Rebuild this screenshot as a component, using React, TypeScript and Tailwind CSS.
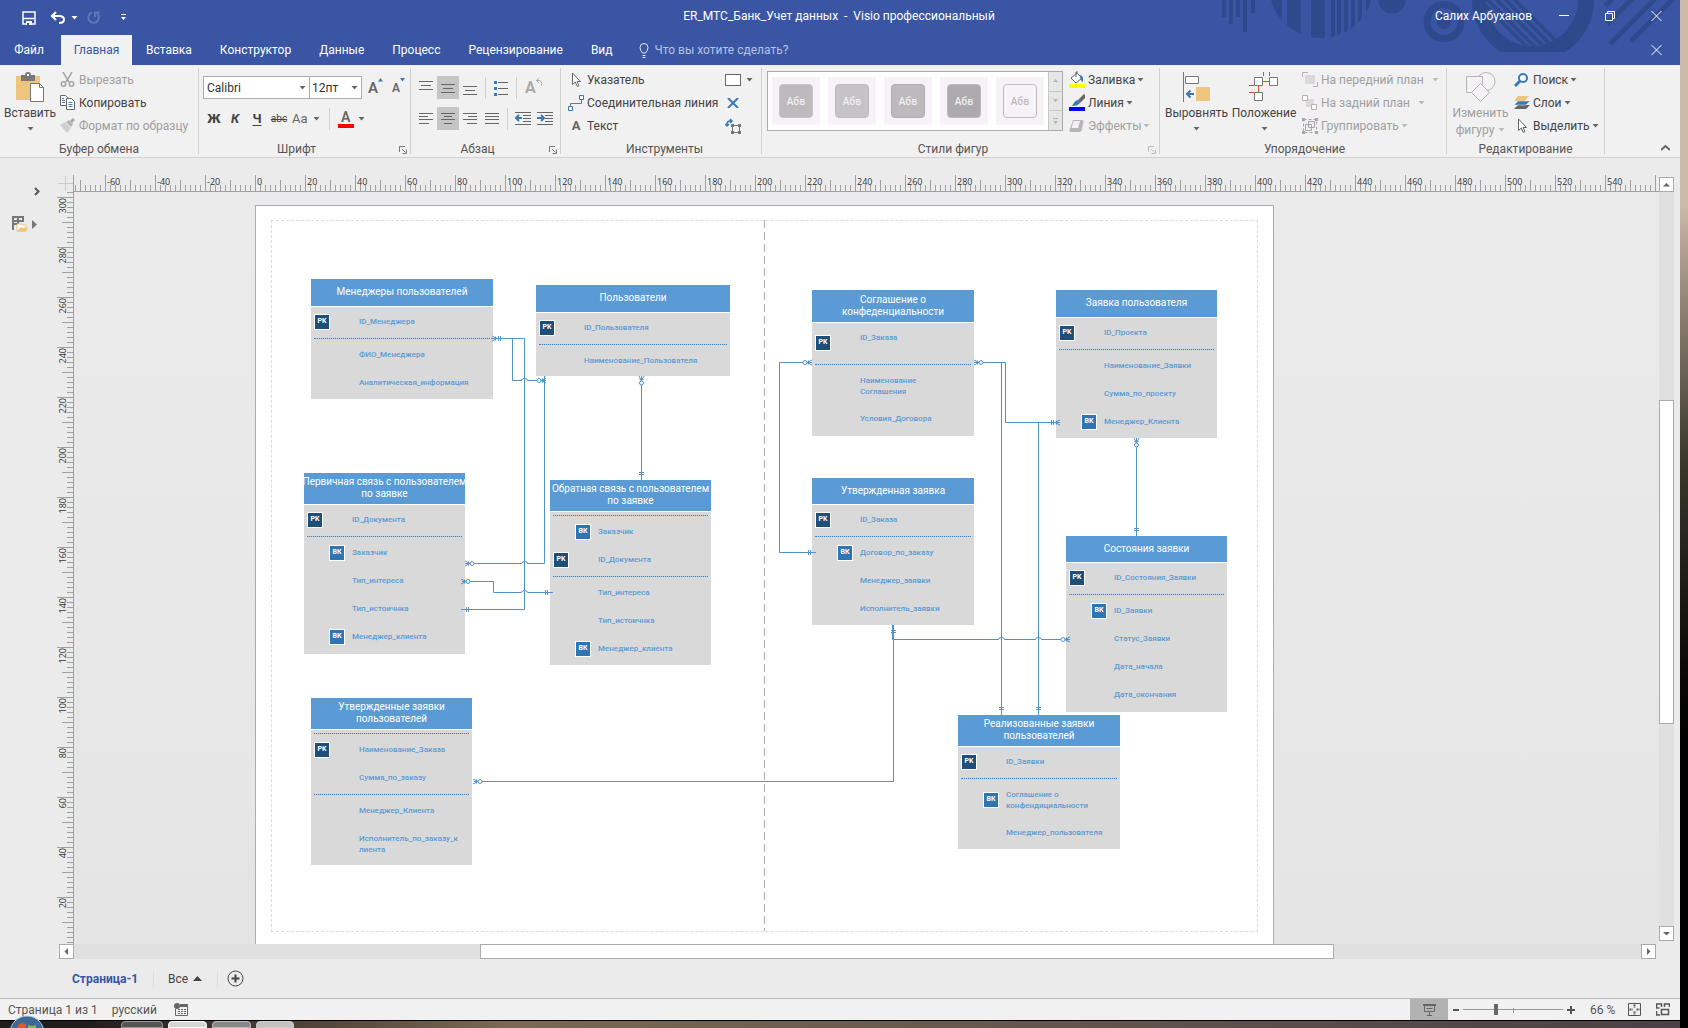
import React from 'react';

interface Row {
  name?: string[];
  pk?: boolean;
  fk?: boolean;
  top?: boolean;
}

interface Entity {
  title: string[];
  x: number;
  y: number;
  w: number;
  head: number;
  body: number;
  rows: Row[];
}

// a row without a name is a divider
const ENTITIES: Entity[] = [
  {
    title: ['Менеджеры пользователей'], x: 55, y: 73, w: 182, head: 27, body: 92,
    rows: [{ name: ['ID_Менеджера'], pk: true }, {}, { name: ['ФИО_Менеджера'] }, { name: ['Аналитическая_информация'] }],
  },
  {
    title: ['Пользователи'], x: 280, y: 79, w: 194, head: 27, body: 63,
    rows: [{ name: ['ID_Пользователя'], pk: true }, {}, { name: ['Наименование_Пользователя'] }],
  },
  {
    title: ['Первичная связь с пользователем', 'по заявке'], x: 48, y: 267, w: 161, head: 31, body: 149,
    rows: [
      { name: ['ID_Документа'], pk: true }, {}, { name: ['Заказчик'], fk: true }, { name: ['Тип_интереса'] },
      { name: ['Тип_истоичнка'] }, { name: ['Менеджер_клиента'], fk: true },
    ],
  },
  {
    title: ['Обратная связь с пользователем', 'по заявке'], x: 294, y: 274, w: 161, head: 31, body: 153,
    rows: [
      {}, { name: ['Заказчик'], fk: true }, { name: ['ID_Документа'], pk: true }, {}, { name: ['Тип_интереса'] },
      { name: ['Тип_истоичнка'] }, { name: ['Менеджер_клиента'], fk: true },
    ],
  },
  {
    title: ['Утвержденные заявки', 'пользователей'], x: 55, y: 492, w: 161, head: 31, body: 135,
    rows: [
      {}, { name: ['Наименование_Заказа'], pk: true }, { name: ['Сумма_по_заказу'] }, {},
      { name: ['Менеджер_Клиента'] }, { name: ['Исполнитель_по_заказу_к', 'лиента'] },
    ],
  },
  {
    title: ['Соглашение о', 'конфеденциальности'], x: 556, y: 84, w: 162, head: 32, body: 113,
    rows: [
      { name: ['ID_Заказа'], pk: true, top: true }, {}, { name: ['Наименование', 'Соглашения'] }, { name: ['Условия_Договора'] },
    ],
  },
  {
    title: ['Утвержденная заявка'], x: 556, y: 272, w: 162, head: 26, body: 120,
    rows: [
      { name: ['ID_Заказа'], pk: true }, {}, { name: ['Договор_по_заказу'], fk: true },
      { name: ['Менеджер_заявки'] }, { name: ['Исполнитель_заявки'] },
    ],
  },
  {
    title: ['Заявка пользователя'], x: 800, y: 84, w: 161, head: 27, body: 120,
    rows: [
      { name: ['ID_Проекта'], pk: true }, {}, { name: ['Наименование_Заявки'] },
      { name: ['Сумма_по_проекту'] }, { name: ['Менеджер_Клиента'], fk: true },
    ],
  },
  {
    title: ['Состояния заявки'], x: 810, y: 330, w: 161, head: 26, body: 149,
    rows: [
      { name: ['ID_Состояния_Заявки'], pk: true }, {}, { name: ['ID_Заявки'], fk: true },
      { name: ['Статус_Заявки'] }, { name: ['Дата_начала'] }, { name: ['Дата_окончания'] },
    ],
  },
  {
    title: ['Реализованные заявки', 'пользователей'], x: 702, y: 509, w: 162, head: 31, body: 102,
    rows: [
      { name: ['ID_Заявки'], pk: true }, {}, { name: ['Соглашение о', 'конфендициальности'], fk: true },
      { name: ['Менеджер_пользователя'] },
    ],
  },
];

const CONNECTORS = [
  'M235 132.5H268.5V403.5H205',
  'M256.5 132.5V174.5H265.5a3 2 0 0 1 6 0H290',
  'M288.5 170V357.5H271.5a3 2 0 0 0 -6 0H209',
  'M206 375.5H237.5V386.5H265.5a3 2 0 0 1 6 0H297',
  'M385.5 170V274',
  'M556 156.5H523.5V346.5H560',
  'M718 156.5H749.5V216.5H804',
  'M745.5 156.5V509',
  'M782.5 216.5V509',
  'M880.5 232V330',
  'M636.5 419V433.5H742.5a3 2 0 0 1 6 0H779.5a3 2 0 0 1 6 0H814',
  'M637.5 419V575.5H218',
];

type EndKind = 'one' | 'many' | 'optional';

const ENDS: { kind: EndKind; x: number; y: number; turn: number }[] = [
  { kind: 'many', x: 236, y: 132.5, turn: 0 },
  { kind: 'one', x: 205, y: 403.5, turn: 0 },
  { kind: 'optional', x: 290, y: 174.5, turn: 180 },
  { kind: 'optional', x: 209, y: 357.5, turn: 0 },
  { kind: 'optional', x: 205, y: 375.5, turn: 0 },
  { kind: 'one', x: 297, y: 386.5, turn: 180 },
  { kind: 'optional', x: 385.5, y: 170, turn: 90 },
  { kind: 'one', x: 385.5, y: 274, turn: -90 },
  { kind: 'optional', x: 556, y: 156.5, turn: 180 },
  { kind: 'one', x: 560, y: 346.5, turn: 180 },
  { kind: 'optional', x: 718, y: 156.5, turn: 0 },
  { kind: 'many', x: 804, y: 216.5, turn: 180 },
  { kind: 'one', x: 745.5, y: 509, turn: -90 },
  { kind: 'one', x: 782.5, y: 509, turn: -90 },
  { kind: 'optional', x: 880.5, y: 232, turn: 90 },
  { kind: 'one', x: 880.5, y: 330, turn: -90 },
  { kind: 'one', x: 637.5, y: 419, turn: 90 },
  { kind: 'optional', x: 814, y: 433.5, turn: 180 },
  { kind: 'optional', x: 217, y: 575.5, turn: 0 },
];

const TABS = ['Вставка', 'Конструктор', 'Данные', 'Процесс', 'Рецензирование', 'Вид'];

const Arrow: React.FC<{ className?: string }> = ({ className = 'text-[#666]' }) => (
  <svg className={`shrink-0 ${className}`} width="7" height="4" viewBox="0 0 7 4" fill="currentColor">
    <path d="M.5 0h6L3.500 3.500z" />
  </svg>
);

const Launcher: React.FC<{ faded?: boolean }> = ({ faded }) => (
  <button aria-label="Параметры" className={`absolute right-[3px] bottom-0 ${faded ? 'text-[#bbb]' : 'text-[#777]'}`}>
    <svg width="8" height="8" viewBox="0 0 8 8" fill="none" stroke="currentColor">
      <path d="M.5 6V.5H6M3 3l3.500 3.500M7.500 3.500v4h-4" />
    </svg>
  </button>
);

const Group: React.FC<{ title: string; className: string; launcher?: 'on' | 'faded'; children: React.ReactNode }> = ({
  title, className, launcher, children,
}) => (
  <section className={`relative my-[3px] flex shrink-0 flex-col border-r border-[#d0d0d0] ${className}`}>
    <div className="flex h-[72px] shrink-0">{children}</div>
    <h2 className={`text-center text-[12px] leading-[18px] text-[#555] ${launcher ? 'pr-5' : ''}`}>{title}</h2>
    {launcher && <Launcher faded={launcher === 'faded'} />}
  </section>
);

const Item: React.FC<{ icon: React.ReactNode; label: string; arrow?: boolean; wide?: boolean; off?: boolean }> = ({
  icon, label, arrow, wide, off,
}) => (
  <button className={`flex h-[23px] items-center whitespace-nowrap ${off ? 'text-[#a0a0a0]' : 'text-[#444]'}`}>
    <span className="flex w-[19px] shrink-0">{icon}</span>
    {label}
    {arrow && <Arrow className={`${wide ? 'ml-[8px]' : 'ml-[2px]'} ${off ? 'text-[#bbb]' : 'text-[#666]'}`} />}
  </button>
);

/* Horizontal strokes of a paragraph icon */
const Lines: React.FC<{ rows: [number, number, number][] }> = ({ rows }) => (
  <svg width="14" height="14" viewBox="0 0 14 14" stroke="#666">
    {rows.map(([x1, x2, y]) => <path key={y} d={`M${x1} ${y}.5H${x2}`} />)}
  </svg>
);

const ParaButton: React.FC<{ label: string; on?: boolean; children: React.ReactNode }> = ({ label, on, children }) => (
  <button aria-label={label} className={`flex h-[23px] w-[22px] items-center justify-center ${on ? 'bg-[#c5c5c5]' : ''}`}>
    {children}
  </button>
);

const Cursor = () => (
  <svg width="16" height="16" viewBox="0 0 16 16" fill="#fff" stroke="#666">
    <path d="M4.500 1v11.500l2.800-2.500 2 4.500 1.700-.8-2-4.200h3.500z" />
  </svg>
);

const VSep = () => <span className="block h-[22px] w-px bg-[#d0d0d0]" />;

const Clipboard = () => (
  <Group title="Буфер обмена" className="w-[199px]">
    <button className="flex w-[60px] flex-col items-center pt-1 text-[#444]">
      <svg width="30" height="31" viewBox="0 0 30 31">
        <path d="M1 4h24v24H1z" fill="#eec57c" />
        <path d="M6 3h4q0-3 3-3t3 3h4v6H6z" fill="#777" />
        <path d="M12 2h2v2h-2z" fill="#fff" />
        <path d="M15.500 11.500h9l4 4v14h-13z" fill="#fff" stroke="#777" />
        <path d="M24.500 11.500v4h4" fill="none" stroke="#777" />
      </svg>
      <span className="leading-[20px]">Вставить</span>
      <Arrow className="mt-1 text-[#666]" />
    </button>
    <div className="flex flex-col">
      <Item off label="Вырезать" icon={
        <svg width="15" height="15" viewBox="0 0 15 15" fill="none" stroke="#a5a5a5" strokeWidth="1.500">
          <path d="M3 0l6 10M12 0L6 10" /><circle cx="3.500" cy="12" r="2.200" /><circle cx="11.500" cy="12" r="2.200" />
        </svg>
      } />
      <Item label="Копировать" icon={
        <svg width="15" height="15" viewBox="0 0 15 15" fill="#fff" stroke="#666">
          <path d="M.5.500h5l2 2v8h-7z" /><path d="M6.500 3.500h5l3 3v8h-8z" />
          <path d="M2 3.500h2M2 5.500h3M2 7.500h3M8.500 7.500h4M8.500 9.500h4M8.500 11.500h4" stroke="#3c78b4" />
        </svg>
      } />
      <Item off label="Формат по образцу" icon={
        <svg width="15" height="15" viewBox="0 0 15 15">
          <path d="M10 3l3-3 2 2-3 3z" fill="#a5a5a5" /><path d="M6 4l3-2 4 4-2 3z" fill="#b5b5b5" />
          <path d="M0 7l5-3 6 6-4 5z" fill="#d0ccd0" />
        </svg>
      } />
    </div>
  </Group>
);

const FontGroup = () => (
  <Group title="Шрифт" className="w-[212px] pl-1" launcher="on">
    <div className="flex flex-col gap-2 pt-[8px]">
      <div className="flex h-[23px] items-center">
        <div className="relative">
          <select aria-label="Шрифт" className="h-[23px] w-[107px] appearance-none border border-[#ababab] bg-white pl-[3px] text-[#333]">
            <option>Calibri</option>
          </select>
          <Arrow className="absolute top-[10px] right-1 text-[#666]" />
        </div>
        <div className="relative -ml-px">
          <select aria-label="Размер шрифта" className="h-[23px] w-[53px] appearance-none border border-[#ababab] bg-white pl-[2px] text-[#333]">
            <option>12пт</option>
          </select>
          <Arrow className="absolute top-[10px] right-1 text-[#666]" />
        </div>
        <button aria-label="Увеличить размер" className="ml-[6px] flex w-[22px] text-[15px] leading-[20px] font-semibold text-[#666]">
          A<svg width="5" height="4" viewBox="0 0 5 4" fill="#3c78b4"><path d="M0 3.500L2.500 0 5 3.500z" /></svg>
        </button>
        <button aria-label="Уменьшить размер" className="ml-[2px] flex text-[12px] leading-[20px] font-semibold text-[#666]">
          A<svg width="5" height="4" viewBox="0 0 5 4" fill="#3c78b4"><path d="M0 0h5L2.500 3.500z" /></svg>
        </button>
      </div>
      <div className="flex h-[23px] items-center text-[13px] text-[#444]">
        <button className="w-[22px] font-extrabold">Ж</button>
        <button className="w-[20px] font-bold italic">К</button>
        <button className="w-[24px] font-bold underline underline-offset-2">Ч</button>
        <button className="w-[20px] text-[10px] line-through">abc</button>
        <button className="flex items-center gap-[5px] pl-[3px] text-[#666]">Aa<Arrow /></button>
        <span className="ml-[9px]"><VSep /></span>
        <button aria-label="Цвет текста" className="ml-2 flex items-center gap-1">
          <span className="flex w-[16px] flex-col items-center">
            <span className="text-[14px] leading-[14px] font-semibold text-[#666]">A</span>
            <span className="h-[4px] w-[16px] bg-[#f00]" />
          </span>
          <Arrow />
        </button>
      </div>
    </div>
  </Group>
);

const Paragraph = () => (
  <Group title="Абзац" className="w-[150px] pl-[4px]" launcher="on">
    <div className="flex flex-col gap-2 pt-[8px]">
      <div className="flex h-[23px] items-center">
        <ParaButton label="По верхнему краю"><Lines rows={[[0, 14, 0], [2, 12, 4], [0, 14, 8]]} /></ParaButton>
        <ParaButton label="По середине" on><Lines rows={[[0, 14, 3], [2, 12, 7], [0, 14, 11]]} /></ParaButton>
        <ParaButton label="По нижнему краю"><Lines rows={[[0, 14, 5], [2, 12, 9], [0, 14, 13]]} /></ParaButton>
        <span className="px-1"><VSep /></span>
        <ParaButton label="Маркеры">
          <svg width="14" height="16" viewBox="0 0 14 16">
            <path d="M0 1h3v3H0zM0 7h3v3H0zM0 13h3v3H0z" fill="#3c78b4" />
            <path d="M4 2.500h10M4 8.500h10M4 14.500h10" stroke="#666" />
          </svg>
        </ParaButton>
        <span className="px-1"><VSep /></span>
        <button aria-label="Поворот текста" className="ml-1 flex text-[16px] leading-[20px] font-bold text-[#aaa]">
          A
          <svg width="7" height="9" viewBox="0 0 7 9" fill="none" stroke="#aaa">
            <path d="M0 2.500h3q3 0 2.500 5M3 0L.5 2.500 3 5" />
          </svg>
        </button>
      </div>
      <div className="flex h-[23px] items-center">
        <ParaButton label="По левому краю"><Lines rows={[[0, 14, 1], [0, 9, 4], [0, 14, 7], [0, 10, 11]]} /></ParaButton>
        <ParaButton label="По центру" on><Lines rows={[[0, 14, 1], [3, 11, 4], [0, 14, 7], [3, 11, 11]]} /></ParaButton>
        <ParaButton label="По правому краю"><Lines rows={[[0, 14, 1], [5, 14, 4], [0, 14, 7], [4, 14, 11]]} /></ParaButton>
        <ParaButton label="По ширине"><Lines rows={[[0, 14, 1], [0, 14, 4], [0, 14, 7], [0, 14, 11]]} /></ParaButton>
        <span className="px-1"><VSep /></span>
        {['M4 3L1 6l3 3M1 6h6', 'M4 3l3 3-3 3M7 6H0'].map((d) => (
          <ParaButton key={d} label="Отступ">
            <svg width="16" height="13" viewBox="0 0 16 13" fill="none">
              <path d="M0 .500h16M8 3.500h8M8 6.500h8M8 9.500h8M0 12.500h16" stroke="#666" />
              <path d={d} stroke="#3c78b4" strokeWidth="2" />
            </svg>
          </ParaButton>
        ))}
      </div>
    </div>
  </Group>
);

const Tools = () => (
  <Group title="Инструменты" className="w-[201px] pl-[7px]">
    <div className="flex w-[157px] flex-col">
      <Item label="Указатель" icon={<Cursor />} />
      <Item label="Соединительная линия" icon={
        <svg width="16" height="16" viewBox="0 0 16 16" fill="#fff">
          <path d="M2.500 11V8.500h11V5" fill="none" stroke="#777" />
          <path d="M11.500.500h4v4h-4zM.5 11.500h4v4h-4z" stroke="#3c78b4" />
        </svg>
      } />
      <Item label="Текст" icon={<span className="w-[16px] text-center text-[13px] font-bold text-[#666]">A</span>} />
    </div>
    <div className="flex flex-col">
      <button aria-label="Прямоугольник" className="flex h-[23px] items-center gap-[5px]">
        <span className="h-[12px] w-[16px] border border-[#666] bg-white" />
        <Arrow />
      </button>
      <button aria-label="Точка соединения" className="flex h-[23px] w-[16px] items-center justify-center">
        <svg width="12" height="10" viewBox="0 0 12 10" stroke="#3c78b4" strokeWidth="2"><path d="M1 0l10 10M11 0L1 10" /></svg>
      </button>
      <button aria-label="Текстовый блок" className="flex h-[23px] w-[16px] items-center">
        <svg width="16" height="16" viewBox="0 0 16 16" fill="none">
          <path d="M2 9V6q0-3 3-3h2M5 1l2 2-2 2M0 6l2 2 2-2" stroke="#3c78b4" strokeWidth="1.500" />
          <path d="M7.500 7.500h7v7h-7z" stroke="#777" />
          <path d="M6 6h3v3H6zM13 6h3v3h-3zM6 13h3v3H6zM13 13h3v3h-3z" fill="#777" />
        </svg>
      </button>
    </div>
  </Group>
);

const STYLES = [
  'bg-[#bdbabd] border-[#c6c3c6] text-[#eee]',
  'bg-[#c6c3c6] border-[#bdbabd] text-[#eee]',
  'bg-[#bdbabd] border-[#b0adb0] text-[#eee]',
  'bg-[#adaaad] border-[#bdbabd] text-[#eee]',
  'bg-[#f7f2f7] border-[#c0bdc0] text-[#c0bdc0]',
];

const ShapeStyles = () => (
  <Group title="Стили фигур" className="w-[398px] pl-[5px]" launcher="faded">
    <div className="mt-[3px] flex h-[60px] border border-[#ababab] bg-white">
      <div className="flex gap-2 px-1 py-[5px]">
        {STYLES.map((style, i) => (
          <button key={i} className="flex h-[48px] w-[48px] items-center justify-center bg-[#f7f2f7]">
            <span className={`flex h-[34px] w-[34px] items-center justify-center rounded-[4px] border font-['Open_Sans',sans-serif] text-[10px] font-semibold ${style}`}>Абв</span>
          </button>
        ))}
      </div>
      <div className="flex w-[14px] flex-col divide-y divide-[#c6c6c6] border-l border-[#c6c6c6] bg-[#e6e6e6]">
        {['M0 4h5L2.500 1z', 'M0 1h5L2.500 4z', 'M0 0h5v1H0zM0 3h5L2.500 6z'].map((d) => (
          <button key={d} aria-label="Прокрутка стилей" className="flex flex-1 items-center justify-center">
            <svg width="5" height="6" viewBox="0 0 5 6" fill="#b5b5b5"><path d={d} /></svg>
          </button>
        ))}
      </div>
    </div>
    <div className="flex flex-col pl-[6px]">
      <Item label="Заливка" arrow icon={
        <svg width="16" height="17" viewBox="0 0 16 17">
          <path d="M2 7l6-5 5 5-6 5z" fill="#fff" stroke="#666" /><path d="M7 6V1h2" fill="none" stroke="#666" />
          <path d="M11 4q4 1 3 7-3-1-3-7z" fill="#3c78b4" /><path d="M0 13h16v4H0z" fill="#ff0" />
        </svg>
      } />
      <Item label="Линия" arrow icon={
        <svg width="16" height="17" viewBox="0 0 16 17">
          <path d="M9 6l6-6 1 1v3l-5 5z" fill="#666" /><path d="M3 12q3-6 6-6l2 3q-2 3-8 3z" fill="#3c78b4" />
          <path d="M0 13h16v4H0z" fill="#00f" />
        </svg>
      } />
      <Item label="Эффекты" arrow off icon={
        <svg width="15" height="14" viewBox="0 0 15 14">
          <path d="M4 1h9q2 0 1.500 2L13 10q-.5 3-3 3H2q-2 0-1.500-2z" fill="#b8b5b8" />
          <path d="M4.500 2h6.500l-2 7H2.500z" fill="#f5f2f5" />
        </svg>
      } />
    </div>
  </Group>
);

const Arrange = () => (
  <Group title="Упорядочение" className="w-[287px] pl-[3px]">
    <button className="flex w-[67px] flex-col items-center pt-1 text-[#444]">
      <svg width="28" height="31" viewBox="0 0 28 31">
        <path d="M.5 0v30" stroke="#777" /><path d="M2.500 4.500h13v7h-13z" fill="#fff" stroke="#777" />
        <path d="M13 15h14v14H13z" fill="#eec57c" />
        <path d="M11 22H4M7.500 18.500L4 22l3.500 3.500" stroke="#3c78b4" strokeWidth="2" fill="none" />
      </svg>
      <span className="leading-[20px]">Выровнять</span>
      <Arrow className="mt-1 text-[#666]" />
    </button>
    <button className="flex w-[68px] flex-col items-center pt-1 text-[#444]">
      <svg width="30" height="31" viewBox="0 0 30 31" fill="#fff">
        <path d="M14.500 0v4M20.500 0v4M14 9.500h7M0 13.500h5M9.500 14v6M0 20.500h5" stroke="#d9532c" />
        <path d="M5.500 5.500h8v8h-8zM20.500 5.500h8v8h-8zM5.500 20.500h8v8h-8z" stroke="#777" />
      </svg>
      <span className="leading-[20px]">Положение</span>
      <Arrow className="mt-1 text-[#666]" />
    </button>
    <div className="flex flex-col pl-[4px]">
      <Item off arrow wide label="На передний план" icon={
        <svg width="16" height="16" viewBox="0 0 16 16" fill="none" stroke="#b5b0b5">
          <path d="M3 3h10v9H3z" fill="#dcd7dc" stroke="none" /><path d="M.5 5V.5H6M15.500 10v4.500H11" />
        </svg>
      } />
      <Item off arrow wide label="На задний план" icon={
        <svg width="16" height="16" viewBox="0 0 16 16" fill="#fff" stroke="#b5b0b5">
          <path d="M4 4h8v8H4z" fill="#dcd7dc" stroke="none" /><path d="M.5.500h5v5h-5zM9.500 9.500h5v5h-5z" />
        </svg>
      } />
      <Item off arrow label="Группировать" icon={
        <svg width="16" height="16" viewBox="0 0 16 16" fill="none" stroke="#aaa5aa">
          <path d="M1.500 1.500h13v13h-13z" strokeDasharray="3 2" /><path d="M3.500 6.500h6v6h-6zM6.500 3.500h6v6h-6z" />
          <path d="M0 0h3v3H0zM13 0h3v3h-3zM0 13h3v3H0zM13 13h3v3h-3z" fill="#aaa5aa" stroke="none" />
        </svg>
      } />
    </div>
  </Group>
);

const Editing = () => (
  <Group title="Редактирование" className="w-[158px]">
    <button className="flex w-[67px] flex-col items-center pt-1 text-[#a0a0a0]">
      <svg width="30" height="31" viewBox="0 0 30 31" fill="#f5f2f5" stroke="#b8b3b8">
        <circle cx="20" cy="9.500" r="9" /><path d="M.5 4.500h16v16H.5z" /><path d="M14.500 11.500l9 9-9 9-9-9z" />
      </svg>
      <span className="leading-[20px]">Изменить</span>
      <span className="flex items-center gap-1 leading-[14px]">фигуру<Arrow className="text-[#bbb]" /></span>
    </button>
    <div className="flex flex-col">
      <Item arrow label="Поиск" icon={
        <svg width="15" height="14" viewBox="0 0 15 14" fill="#fff" stroke="#3c78b4" strokeWidth="2">
          <path d="M6 8l-5 5" strokeWidth="3" /><circle cx="9" cy="5" r="4" />
        </svg>
      } />
      <Item arrow label="Слои" icon={
        <svg width="16" height="14" viewBox="0 0 16 14">
          <path d="M4 9h12l-4 4H0z" fill="#666" /><path d="M4 5h12l-4 4H0z" fill="#3c78b4" stroke="#f1f1f1" strokeWidth=".5" />
          <path d="M4 0h11l-4 5H0z" fill="#eec57c" />
        </svg>
      } />
      <Item arrow label="Выделить" icon={<Cursor />} />
    </div>
  </Group>
);

const TitleArt = () => (
  <svg className="absolute top-0 right-0" width="470" height="65" viewBox="0 0 470 65" fill="#2f4a8c">
    <defs>
      <clipPath id="disc"><circle cx="111" cy="-14" r="52" /></clipPath>
      <clipPath id="arc"><path d="M250 0h150v52H250z" /></clipPath>
      <clipPath id="inner"><circle cx="322" cy="0" r="46" /></clipPath>
    </defs>
    <path d="M12 0h4v17h-4zM19 0h4v24h-4zM26 0h4v17h-4zM33 0h4v32h-4zM41 0h4v13h-4z" />
    <path clipPath="url(#disc)" d="M58 0h14v40H58zM77 0h14v40H77zM101 0h14v40h-14zM121 0h4v40h-4zM127 0h4v40h-4zM134 0h4v40h-4zM141 0h4v40h-4zM148 0h4v40h-4zM156 0h6v40h-6z" />
    <circle cx="182" cy="0" r="13.500" />
    <circle cx="234" cy="21.500" r="17" fill="none" stroke="#2f4a8c" strokeWidth="7" />
    <circle cx="234" cy="21.500" r="7.500" />
    <g clipPath="url(#arc)">
      <circle cx="323" cy="0" r="61" />
      <circle cx="322" cy="0" r="46" fill="#3955a3" />
      <path clipPath="url(#inner)" d="M262 -8l70 70M270 -8l70 70M279 -8l70 70M288 -8l70 70M297 -8l70 70" stroke="#2f4a8c" strokeWidth="3.500" />
    </g>
    <path d="M395 6l7-7M397 24l25-25M400 44l45-45M421 41l42-42" stroke="#2f4a8c" strokeWidth="5" />
  </svg>
);

const TitleBar = () => (
  <header className="relative bg-[#3955a3] text-white">
    <TitleArt />
    <div className="relative flex h-[35px] items-center">
      <div className="flex flex-1 items-center pl-[22px]">
        <button aria-label="Сохранить" className="mr-[14px]">
          <svg width="14" height="14" viewBox="0 0 14 14" fill="none" stroke="#fff" strokeWidth="1.500">
            <path d="M1 1h12v12H1zM1 7.500h12" /><path d="M4 10h6v4H4z" fill="#fff" stroke="none" /><path d="M5 12h2v2H5z" fill="#3955a3" stroke="none" />
          </svg>
        </button>
        <button aria-label="Отменить" className="mr-[6px]">
          <svg width="15" height="13" viewBox="0 0 15 13" fill="none" stroke="#fff" strokeWidth="2">
            <path d="M1 5h8q5 0 5 3.500T9 12M6 1L2 5l4 4" />
          </svg>
        </button>
        <Arrow className="mr-[9px] text-white" />
        <button aria-label="Повторить" className="mr-[20px]">
          <svg width="14" height="13" viewBox="0 0 14 13" fill="none" stroke="#5f77b8" strokeWidth="2">
            <path d="M5 1.500A5.300 5.300 0 1 0 10 2.500M8 6V1.500h5" />
          </svg>
        </button>
        <button aria-label="Настройка панели">
          <svg width="5" height="7" viewBox="0 0 5 7" fill="#fff"><path d="M0 0h5v1H0zM0 3h5L2.500 6z" /></svg>
        </button>
      </div>
      <h1 className="pr-6 pb-1 text-[12px] whitespace-pre">ER_МТС_Банк_Учет данных  -  Visio профессиональный</h1>
      <div className="flex flex-1 items-center justify-end pb-1">
        <span className="pr-[27px]">Салих Арбуханов</span>
        <button aria-label="Свернуть" className="mr-[36px] h-px w-[10px] bg-white" />
        <button aria-label="Восстановить" className="mr-[36px]">
          <svg width="10" height="10" viewBox="0 0 10 10" fill="none" stroke="#fff"><path d="M.5 2.500h7v7h-7zM2.500 2.500v-2h7v7h-2" /></svg>
        </button>
        <button aria-label="Закрыть" className="mr-[18px]">
          <svg width="11" height="10" viewBox="0 0 11 10" stroke="#fff"><path d="M.5 0l10 10M10.500 0l-10 10" /></svg>
        </button>
      </div>
    </div>
    <nav className="relative flex h-[30px] items-stretch">
      <button className="w-[61px] pr-[3px]">Файл</button>
      <button className="w-[71px] bg-[#f1f1f1] text-[#3955a3]">Главная</button>
      {TABS.map((tab) => <button key={tab} className="px-[14px]">{tab}</button>)}
      <label className="ml-3 flex items-center gap-[6px]">
        <svg width="10" height="15" viewBox="0 0 10 15" fill="none" stroke="#e5e9f5">
          <path d="M3.500 10Q1 7 1 4.500a4 4 0 0 1 8 0Q9 7 6.500 10zM3.500 12.500h3M3.500 14.500h3" />
        </svg>
        <input placeholder="Что вы хотите сделать?" className="w-[150px] bg-transparent placeholder:text-[#b8c3e3]" />
      </label>
      <button aria-label="Закрыть документ" className="mr-[18px] ml-auto">
        <svg width="11" height="10" viewBox="0 0 11 10" stroke="#fff"><path d="M.5 0l10 10M10.500 0l-10 10" /></svg>
      </button>
    </nav>
  </header>
);

const range = (from: number, to: number) => Array.from({ length: to - from + 1 }, (_, i) => from + i);

// One tick is two millimetres, a labelled one every ten ticks
const HorizontalRuler = () => (
  <svg className="h-[17px] w-full font-['Open_Sans',sans-serif]" stroke="#a0a0a0">
    <path d="M0 16.500H1700" />
    {range(-36, 295).map((n) => (
      <path key={n} d={`M${181.5 + n * 5} 17V${n % 10 === 0 ? 0 : n % 5 === 0 ? 5 : 10}`} />
    ))}
    {range(-3, 27).map((n) => (
      <text key={n} x={183 + n * 50} y="10" fontSize="9" fill="#333" stroke="none">{n * 20}</text>
    ))}
  </svg>
);

const VerticalRuler = () => (
  <svg className="h-full w-[17px] font-['Open_Sans',sans-serif]" stroke="#a0a0a0">
    <path d="M16.500 0V1100" />
    {range(-1, 149).map((n) => (
      <path key={n} d={`M17 ${5.5 + n * 5}H${n % 10 === 0 ? 0 : n % 5 === 0 ? 5 : 10}`} />
    ))}
    {range(0, 14).map((n) => (
      <text key={n} transform={`translate(9 ${6 + n * 50}) rotate(-90)`} textAnchor="end" fontSize="9" fill="#333" stroke="none">{300 - n * 20}</text>
    ))}
  </svg>
);

const Key: React.FC<{ text: string; className: string }> = ({ text, className }) => (
  <span className={`block h-[16px] w-[16px] border border-white text-center text-[7px] leading-[13px] font-bold text-white ${className}`}>
    {text}
  </span>
);

const EntityBox: React.FC<{ entity: Entity }> = ({ entity }) => (
  <article className="absolute flex flex-col" style={{ left: entity.x, top: entity.y, width: entity.w }}>
    <h3
      className="flex flex-col items-center justify-center bg-[#5b9bd5] pb-px text-[10px] leading-[12px] whitespace-nowrap text-white"
      style={{ height: entity.head }}
    >
      {entity.title.map((line) => <span key={line}>{line}</span>)}
    </h3>
    <div className="mt-px bg-[#d9d9d9] px-[3px] pt-px" style={{ height: entity.body }}>
      {entity.rows.map((row, i) => {
        if (!row.name) {
          return <div key={i} className="h-[5px] pt-[2px]"><div className="h-px border-t border-dotted border-[#4a86c0] bg-[#a5c4e2]" /></div>;
        }
        const tall = row.name.length > 1 || row.top;
        return (
          <div key={i} className={`flex items-center ${tall ? 'h-[38px]' : 'h-[28px]'}`}>
            <span className="w-[22px] shrink-0">{row.pk && <Key text="PK" className="bg-[#1f4e79]" />}</span>
            <span className="w-[23px] shrink-0">{row.fk && <Key text="ВК" className="bg-[#2e75b6]" />}</span>
            <span className={`pb-px text-[8px] leading-[11px] font-medium whitespace-nowrap text-[#5b9bd5] ${row.top ? 'self-start pt-[8px]' : ''}`}>
              {row.name.map((line) => <span key={line} className="block">{line}</span>)}
            </span>
          </div>
        );
      })}
    </div>
  </article>
);

const END_PATHS: Record<EndKind, string> = {
  one: 'M5.500 -2.500v5M7.500 -2.500v5',
  many: 'M0 -2.500L5 0L0 2.500M3.500 -2v4M6.500 -2.500v5M8.500 -2.500v5',
  optional: 'M0 -2.500L5 0L0 2.500M3.500 -2v4',
};

const Diagram = () => (
  <>
    {ENTITIES.map((entity) => <EntityBox key={entity.title.join(' ') + entity.x} entity={entity} />)}
    <svg className="absolute top-0 left-0" width="1018" height="737" fill="none" stroke="#5290c8">
      <path d="M508.500 14V725" stroke="#b0b0b0" strokeDasharray="8 4" />
      {CONNECTORS.map((d) => <path key={d} d={d} />)}
      {ENDS.map((end) => (
        <g key={`${end.x}-${end.y}`} transform={`translate(${end.x} ${end.y}) rotate(${end.turn})`}>
          <path d={END_PATHS[end.kind]} />
          {end.kind === 'optional' && <circle cx="7" cy="0" r="2" fill="#fff" />}
        </g>
      ))}
    </svg>
  </>
);

const ScrollButton: React.FC<{ label: string; d: string }> = ({ label, d }) => (
  <button aria-label={label} className="flex h-[15px] w-[15px] shrink-0 items-center justify-center border border-[#ababab] bg-white">
    <svg width="7" height="7" viewBox="0 0 7 7" fill="#666"><path d={d} /></svg>
  </button>
);

const Workspace = () => (
  <main className="flex min-h-0 flex-1 bg-[#ebebeb] pt-[17px]">
    <aside className="flex w-[57px] shrink-0 flex-col items-end gap-[20px] pt-[12px] pr-[17px]">
      <button aria-label="Развернуть">
        <svg width="6" height="9" viewBox="0 0 6 9" fill="none" stroke="#555" strokeWidth="2"><path d="M1 1l3.500 3.500L1 8" /></svg>
      </button>
      <button aria-label="Фигуры" className="flex items-center gap-1 pr-[3px]">
        <svg width="16" height="17" viewBox="0 0 16 17" fill="none">
          <path d="M1 14V1h10v4H1M6 1v7H1" stroke="#777" strokeWidth="2" />
          <path d="M5 15V8h5l1 1h3v6z" fill="#fff" stroke="#eec57c" /><path d="M5 15.500l3-4h8l-2 4z" fill="#eec57c" />
        </svg>
        <svg width="5" height="9" viewBox="0 0 5 9" fill="#777"><path d="M0 0l5 4.500L0 9z" /></svg>
      </button>
    </aside>
    <div className="flex min-w-0 flex-1 flex-col">
      <div className="flex min-h-0 flex-1">
        <div className="flex w-[17px] shrink-0 flex-col">
          <svg className="h-[17px] w-[17px] shrink-0" stroke="#ccc"><path d="M1 8.500h15M8.500 1v15" /><path d="M16.500 0v17" stroke="#a0a0a0" /></svg>
          <div className="min-h-0 flex-1 overflow-hidden"><VerticalRuler /></div>
        </div>
        <div className="flex min-w-0 flex-1 flex-col">
          <HorizontalRuler />
          <div className="min-h-0 flex-1 overflow-hidden bg-linear-to-b from-[#ebebeb] to-[#e5e5e5] pt-[13px] pl-[181px]">
            <div className="relative h-[780px] w-[1019px] border border-[#a8acb4] bg-white">
              <div className="absolute top-[14px] left-[15px] h-[712px] w-[987px] border border-dashed border-[#dcdcdc]" />
              <Diagram />
            </div>
          </div>
        </div>
        <div className="mt-[2px] mr-[6px] mb-[3px] flex w-[15px] shrink-0 flex-col bg-[#e0e0e0]">
          <ScrollButton label="Вверх" d="M0 5.500h7L3.500 2z" />
          <div className="mt-[208px] h-[324px] border border-[#ababab] bg-white" />
          <div className="flex-1" />
          <ScrollButton label="Вниз" d="M0 2h7L3.500 5.500z" />
        </div>
      </div>
      <div className="mr-[24px] ml-[2px] flex h-[15px] shrink-0 bg-[#e0e0e0]">
        <ScrollButton label="Влево" d="M5 0v7L1.500 3.500z" />
        <div className="ml-[406px] w-[854px] border border-[#ababab] bg-white" />
        <div className="flex-1" />
        <ScrollButton label="Вправо" d="M2 0v7l3.500-3.500z" />
      </div>
      <div className="flex h-[39px] shrink-0 items-center pl-[15px]">
        <button className="font-bold text-[#3955a3]">Страница-1</button>
        <span className="mr-[14px] ml-[15px] h-[16px] w-px bg-[#ddd]" />
        <button className="flex items-center gap-[5px] text-[#444]">
          Все
          <svg width="9" height="5" viewBox="0 0 9 5" fill="#444"><path d="M0 5h9L4.500 0z" /></svg>
        </button>
        <span className="mr-[9px] ml-[15px] h-[16px] w-px bg-[#ddd]" />
        <button aria-label="Добавить страницу">
          <svg width="17" height="17" viewBox="0 0 17 17" fill="none" stroke="#444">
            <circle cx="8.500" cy="8.500" r="7.500" /><path d="M4.500 8.500h8M8.500 4.500v8" strokeWidth="2" />
          </svg>
        </button>
      </div>
    </div>
  </main>
);

const StatusBar = () => (
  <footer className="flex h-[22px] shrink-0 items-center border-t border-[#bcbcbc] bg-[#f1f1f1] pl-2 text-[#555]">
    <span>Страница 1 из 1</span>
    <button className="ml-[14px]">русский</button>
    <button aria-label="Запись макроса" className="ml-[17px]">
      <svg width="14" height="13" viewBox="0 0 14 13" fill="none" stroke="#666">
        <path d="M1.500 6v6.500h12V2H6" /><path d="M6 1h8v3H6z" fill="#666" stroke="none" /><circle cx="3" cy="3" r="3" fill="#666" stroke="none" />
        <path d="M4 6.500h8M4 8.500h8M4 10.500h8" strokeDasharray="2 1" />
      </svg>
    </button>
    <button aria-label="Режим презентации" className="ml-auto flex h-[21px] w-[38px] items-center justify-center bg-[#b2b2b2]">
      <svg width="13" height="12" viewBox="0 0 13 12" fill="none" stroke="#666">
        <path d="M0 1h13" strokeWidth="2" /><path d="M1.500 2v5.500h10V2M3.500 4.500h6M6.500 8v3M4 11.500h5" />
      </svg>
    </button>
    <button aria-label="Уменьшить" className="ml-[5px] h-[2px] w-[6px] bg-[#555]" />
    <div className="relative ml-1 flex h-[20px] w-[100px] items-center">
      <span className="absolute top-[8px] left-[50px] h-[5px] w-px bg-[#999]" />
      <input
        type="range"
        aria-label="Масштаб"
        defaultValue={32}
        className="relative h-px w-full appearance-none bg-[#999] [&::-webkit-slider-thumb]:h-[11px] [&::-webkit-slider-thumb]:w-[4px] [&::-webkit-slider-thumb]:appearance-none [&::-webkit-slider-thumb]:bg-[#666]"
      />
    </div>
    <button aria-label="Увеличить" className="ml-1">
      <svg width="8" height="8" viewBox="0 0 8 8" stroke="#555" strokeWidth="2"><path d="M0 4h8M4 0v8" /></svg>
    </button>
    <span className="ml-[15px] w-[38px]">66 %</span>
    <button aria-label="Вписать страницу" className="mr-[15px]">
      <svg width="13" height="13" viewBox="0 0 13 13" fill="none" stroke="#555">
        <path d="M.5.500h12v12H.5z" /><path d="M6.500 1.500v3M6.500 8.500v3M1.500 6.500h3M8.500 6.500h3" strokeWidth="2" strokeDasharray="1.500 .5" />
      </svg>
    </button>
    <button aria-label="Переключить окна" className="mr-[10px]">
      <svg width="14" height="13" viewBox="0 0 14 13" fill="none" stroke="#555" strokeWidth="1.500">
        <path d="M5.500 4V1h-5v4h3M13.500 4V1h-5v3M4 12H.5V8M5.500 6.500h7v5h-7z" />
      </svg>
    </button>
  </footer>
);

const Taskbar = () => (
  <div className="relative flex h-[8px] shrink-0 overflow-visible border-t border-black bg-linear-to-r from-[#231c1c] from-5% via-[#7c6852] via-30% to-[#4a4046]">
    <svg className="absolute -top-[6px] left-[9px]" width="36" height="14" viewBox="0 0 36 14">
      <circle cx="18" cy="18" r="17" fill="#3a6a96" stroke="#b5cadb" />
      <path d="M9 10q4-3 8-1v5H8z" fill="#e2582c" /><path d="M19 10q4 2 8 0v4h-8z" fill="#8cb83c" />
    </svg>
    <div className="flex gap-[5px] pl-[121px]">
      <span className="w-[42px] rounded-t-sm border border-[#999] bg-[#555]" />
      <span className="w-[39px] rounded-t-sm border border-white bg-[#d5d5d5]" />
      <span className="w-[39px] rounded-t-sm border border-[#bbb] bg-[#888]" />
      <span className="w-[38px] rounded-t-sm border border-[#ccc] bg-[#c5c0c0]" />
    </div>
  </div>
);

export default function App() {
  return (
    <div className="flex h-screen overflow-hidden bg-[#f1f1f1] font-[Roboto,'Noto_Sans',sans-serif] text-[12px]">
      <div className="flex min-w-0 flex-1 flex-col">
        <TitleBar />
        <div className="relative flex h-[93px] shrink-0 border-b border-[#d2d2d2] bg-[#f1f1f1]">
          <Clipboard />
          <FontGroup />
          <Paragraph />
          <Tools />
          <ShapeStyles />
          <Arrange />
          <Editing />
          <button aria-label="Свернуть ленту" className="mr-[10px] mb-[6px] ml-auto self-end">
            <svg width="9" height="6" viewBox="0 0 9 6" fill="none" stroke="#666" strokeWidth="2"><path d="M0 5l4.500-4L9 5" /></svg>
          </button>
        </div>
        <Workspace />
        <StatusBar />
        <Taskbar />
      </div>
      <div className="w-2 shrink-0 bg-linear-to-b from-[#cdb9a8] from-20% via-[#3a372c] via-45% to-black to-80%" />
    </div>
  );
}
